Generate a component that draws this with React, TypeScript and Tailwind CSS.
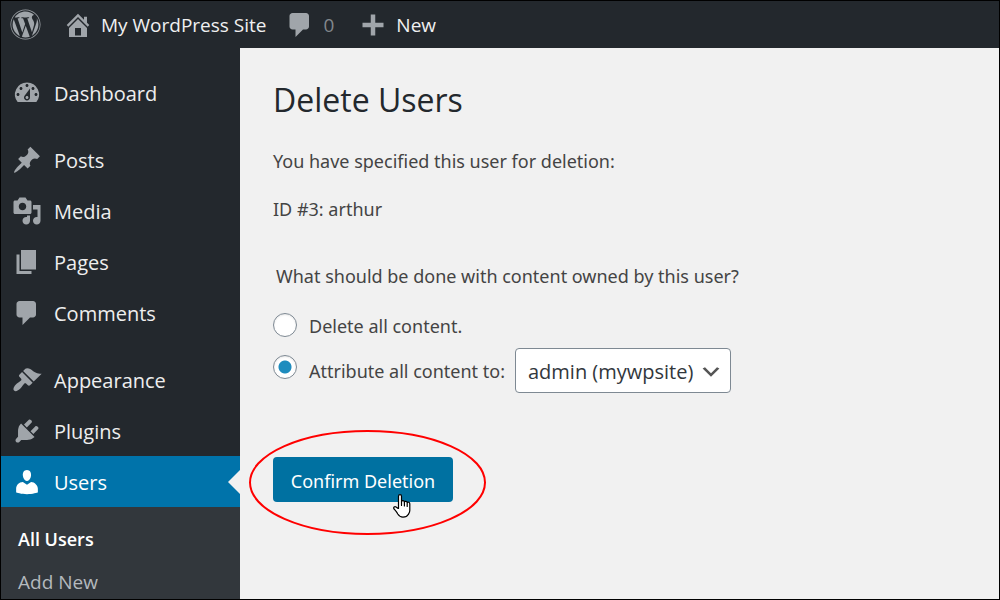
import { useState } from 'react'
import { FaWordpress } from 'react-icons/fa'
import clsx from 'clsx'

const icons = {
  dashboard:
    'M3.76 16h12.48A7.998 7.998 0 0 0 10 3a7.998 7.998 0 0 0-6.24 13zM10 4c.55 0 1 .45 1 1s-.45 1-1 1-1-.45-1-1 .45-1 1-1zM6 6c.55 0 1 .45 1 1s-.45 1-1 1-1-.45-1-1 .45-1 1-1zm8 0c.55 0 1 .45 1 1s-.45 1-1 1-1-.45-1-1 .45-1 1-1zm-5.37 5.55L12 7v6c0 1.1-.9 2-2 2s-2-.9-2-2c0-.57.24-1.08.63-1.45zM4 10c.55 0 1 .45 1 1s-.45 1-1 1-1-.45-1-1 .45-1 1-1zm12 0c.55 0 1 .45 1 1s-.45 1-1 1-1-.45-1-1 .45-1 1-1zm-5 3c0-.55-.45-1-1-1s-1 .45-1 1 .45 1 1 1 1-.45 1-1z',
  post: 'M10.44 3.02l1.82-1.82 6.36 6.35-1.83 1.82c-1.05-.68-2.48-.57-3.41.36l-.75.75c-.92.93-1.04 2.35-.35 3.41l-1.83 1.82-2.41-2.41-2.8 2.79c-.42.42-3.38 2.71-3.8 2.29s1.86-3.39 2.28-3.81l2.79-2.79L4.1 9.36l1.83-1.82c1.05.69 2.48.57 3.4-.36l.75-.75c.93-.92 1.05-2.35.36-3.41z',
  media:
    'M13 11V4c0-.55-.45-1-1-1h-1.67L9 1H5L3.67 3H2c-.55 0-1 .45-1 1v7c0 .55.45 1 1 1h10c.55 0 1-.45 1-1zM7 4.5c1.38 0 2.5 1.12 2.5 2.5S8.38 9.5 7 9.5 4.5 8.38 4.5 7 5.62 4.5 7 4.5zM14 6h5v10.5c0 1.38-1.12 2.5-2.5 2.5S14 17.88 14 16.5s1.12-2.5 2.5-2.5c.17 0 .34.02.5.05V9h-3V6zm-4 8.05V13h2v3.5c0 1.38-1.12 2.5-2.5 2.5S7 17.88 7 16.5 8.12 14 9.5 14c.17 0 .34.02.5.05z',
  page: 'M6 15V2h10v13H6zm-1 1h8v2H3V5h2v11z',
  comments: 'M5 2h9c1.1 0 2 .9 2 2v7c0 1.1-.9 2-2 2h-2l-5 5v-5H5c-1.1 0-2-.9-2-2V4c0-1.1.9-2 2-2z',
  appearance:
    'M14.48 11.06L7.41 3.99l1.5-1.5c.5-.56 2.3-.47 3.51.32 1.21.8 1.43 1.28 2.91 2.1 1.18.64 2.45 1.26 4.45.85zm-.71.71L6.7 4.7 4.93 6.47c-.39.39-.39 1.02 0 1.41l1.06 1.06c.39.39.39 1.03 0 1.42-.6.6-1.43 1.11-2.21 1.69-.35.26-.7.53-1.01.84C1.43 14.23.4 16.08 1.4 17.07c.99 1 2.84-.03 4.18-1.36.31-.31.58-.66.85-1.02.57-.78 1.08-1.61 1.69-2.21.39-.39 1.02-.39 1.41 0l1.06 1.06c.39.39 1.02.39 1.41 0z',
  plugins:
    'M13.11 4.36L9.87 7.6 8 5.73l3.24-3.24c.35-.34 1.05-.2 1.56.32.52.51.66 1.21.31 1.55zm-8 1.77l.91-1.12 9.01 9.01-1.19.84c-.71.71-2.63 1.16-3.82 1.16H6.14L4.9 17.26c-.59.59-1.54.59-2.12 0-.59-.58-.59-1.53 0-2.12l1.24-1.24v-3.88c0-1.13.4-3.19 1.09-3.89zm7.26 3.97l3.24-3.24c.34-.35 1.04-.21 1.55.31.52.51.66 1.21.31 1.55l-3.24 3.25z',
  users:
    'M10 9.25c-2.27 0-2.73-3.44-2.73-3.44C7 4.02 7.82 2 9.97 2c2.16 0 2.98 2.02 2.71 3.81 0 0-.41 3.44-2.68 3.44zm0 2.57L12.72 10c2.39 0 4.52 2.33 4.52 4.53v2.49s-3.65 1.13-7.24 1.13c-3.65 0-7.24-1.13-7.24-1.13v-2.49c0-2.25 1.94-4.48 4.47-4.48z',
  home: 'M16 8.5l1.53 1.53-1.06 1.06L10 4.6l-6.47 6.49-1.06-1.06L10 2.5l4 4v-2h2v4zm-6-2.46l6 5.99V18H4v-5.97zM12 17v-5H8v5h4z',
  plus: 'M17 8.5v3h-5.5V17h-3v-5.5H3v-3h5.5V3h3v5.5z',
}

type IconName = keyof typeof icons

const menuGroups: { label: string; icon: IconName }[][] = [
  [{ label: 'Dashboard', icon: 'dashboard' }],
  [
    { label: 'Posts', icon: 'post' },
    { label: 'Media', icon: 'media' },
    { label: 'Pages', icon: 'page' },
    { label: 'Comments', icon: 'comments' },
  ],
  [
    { label: 'Appearance', icon: 'appearance' },
    { label: 'Plugins', icon: 'plugins' },
    { label: 'Users', icon: 'users' },
  ],
]

function Icon({ name }: { name: IconName }) {
  return (
    <svg viewBox="0 0 20 20" className="size-[30px] shrink-0" fill="currentColor" fillRule="evenodd" aria-hidden="true">
      <path d={icons[name]} />
    </svg>
  )
}

function AdminBar() {
  return (
    <header className="flex h-[47px] shrink-0 items-center bg-[#23282d] pl-[9px] text-[19px] text-[#f0f0f1]">
      <a href="#about" aria-label="About WordPress" className="text-[#a0a5aa]">
        <FaWordpress className="size-[31px]" />
      </a>
      <a href="#site" className="ml-[22px] flex items-center gap-2">
        <span className="text-[#a0a5aa]"><Icon name="home" /></span>
        <span className="pt-0.5">My WordPress Site</span>
      </a>
      <a href="#comments" className="ml-[19px] flex items-center gap-2 text-[#a0a5aa]">
        <Icon name="comments" />
        <span className="pt-0.5 text-[#82878c]">0</span>
      </a>
      <a href="#new" className="ml-6 flex items-center gap-2">
        <span className="text-[#a0a5aa]"><Icon name="plus" /></span>
        <span className="pt-0.5">New</span>
      </a>
    </header>
  )
}

function Sidebar() {
  return (
    <nav className="flex w-[239px] shrink-0 flex-col bg-[#23282d] pt-[19px]">
      <div className="flex flex-col gap-4">
        {menuGroups.map((group) => (
          <ul key={group[0].label}>
            {group.map((item) => {
              const active = item.label === 'Users'
              return (
                <li key={item.label}>
                  <a
                    href={`#${item.label.toLowerCase()}`}
                    className={clsx(
                      'relative flex h-[51px] items-center gap-3 pl-[11px] text-[20px]',
                      active ? 'bg-[#0073aa] text-white' : 'text-[#eeeeee]'
                    )}
                  >
                    <span className={active ? 'text-white' : 'text-[#a0a5aa]'}>
                      <Icon name={item.icon} />
                    </span>
                    <span className="pt-0.5">{item.label}</span>
                    {active && (
                      <span className="absolute top-[14px] right-0 border-y-12 border-r-12 border-y-transparent border-r-[#f1f1f1]" />
                    )}
                  </a>
                </li>
              )
            })}
          </ul>
        ))}
      </div>
      <ul className="flex-1 bg-[#32373c] pt-[11px] pl-[17px] leading-[42px]">
        <li><a href="#all-users" className="text-[18px] font-semibold text-white">All Users</a></li>
        <li><a href="#add-new" className="text-[19px] text-[#b4b9be]">Add New</a></li>
      </ul>
    </nav>
  )
}

const radioClass =
  'size-6 shrink-0 appearance-none rounded-full border border-[#7e8993] bg-white shadow-[inset_0_1px_2px_rgba(0,0,0,0.1)] checked:bg-[radial-gradient(circle,#1e8cbe_6px,transparent_7px)]'

export default function App() {
  const [option, setOption] = useState('reassign')

  return (
    <div className="flex h-screen flex-col overflow-hidden border border-black bg-[#f1f1f1] font-['Open_Sans','Noto_Sans',sans-serif]">
      <AdminBar />
      <div className="flex min-h-0 flex-1">
        <Sidebar />
        <main className="min-w-0 flex-1 pt-[29px] pl-[33px] font-['Noto_Sans',sans-serif] text-[18px] leading-[30px] text-[#444444]">
          <h1 className="font-['Open_Sans',sans-serif] text-[32px] leading-[46px] text-[#23282d]">Delete Users</h1>
          <p className="mt-[23px]">You have specified this user for deletion:</p>
          <p className="mt-[18px]">ID #3: arthur</p>

          <form onSubmit={(e) => e.preventDefault()}>
            <fieldset className="mt-[37px]">
              <legend className="pl-[3px]">What should be done with content owned by this user?</legend>
              <div className="mt-5 flex items-center">
                <input
                  id="delete-all"
                  type="radio"
                  name="delete_option"
                  checked={option === 'delete'}
                  onChange={() => setOption('delete')}
                  className={clsx(radioClass, 'mb-0.5')}
                />
                <label htmlFor="delete-all" className="pl-3">Delete all content.</label>
              </div>
              <div className="mt-[7px] flex items-center">
                <input
                  id="reassign"
                  type="radio"
                  name="delete_option"
                  checked={option === 'reassign'}
                  onChange={() => setOption('reassign')}
                  className={clsx(radioClass, 'mb-2')}
                />
                <label htmlFor="reassign" className="pl-3">Attribute all content to:</label>
                <div className="relative ml-[10px]">
                  <select
                    aria-label="Attribute all content to"
                    className="h-[45px] w-[216px] appearance-none rounded-[4px] border border-[#7e8993] bg-white pt-0.5 pl-3 font-['Open_Sans',sans-serif] text-[20px] text-[#32373c]"
                  >
                    <option>admin (mywpsite)</option>
                  </select>
                  <svg
                    viewBox="0 0 20 20"
                    className="pointer-events-none absolute top-3 right-2 size-6"
                    fill="#555555"
                    aria-hidden="true"
                  >
                    <path d="M5 6l5 5 5-5 2 1-7 7-7-7 2-1z" />
                  </svg>
                </div>
              </div>
            </fieldset>

            <div className="relative mt-16 w-fit">
              <button type="submit" className="h-[45px] w-[180px] rounded-[4px] bg-[#0071a1] pt-0.5 text-[18px] text-white">
                Confirm Deletion
              </button>
              {/* red circle around the button */}
              <svg
                viewBox="0 0 240 108"
                className="pointer-events-none absolute -top-7 -left-[26px] h-[108px] w-[240px] max-w-none"
                fill="none"
                aria-hidden="true"
              >
                <ellipse cx="120.5" cy="53.5" rx="117.5" ry="51.5" stroke="#ff0000" strokeWidth="2" />
              </svg>
              {/* hand cursor */}
              <svg
                viewBox="0 0 20 26"
                className="pointer-events-none absolute top-9 left-[119px] h-[26px] w-5"
                fill="#ffffff"
                stroke="#000000"
                strokeWidth="1.2"
                strokeLinejoin="round"
                strokeLinecap="round"
                aria-hidden="true"
              >
                <path d="M6.5 15.5V3.2c0-2.2 3-2.2 3 0v5.3c.4-1.3 2.7-1.1 2.9.4.5-1 2.6-.7 2.8.6.7-.8 2.6-.4 2.6 1.3v6.7c0 2-1 3-1.6 4.1-.7 1.4-1.7 2.6-5.2 2.6-3 0-4.2-1.5-5.2-3.2-1.2-2.2-2.3-3.3-3.7-5-1.2-1.6.6-3.1 2-2 .9.7 1.6 1.3 2.4 1.5z" />
                <path d="M9.5 8.5v4M12.4 9v4M15.2 10v3.5" />
              </svg>
            </div>
          </form>
        </main>
      </div>
    </div>
  )
}
